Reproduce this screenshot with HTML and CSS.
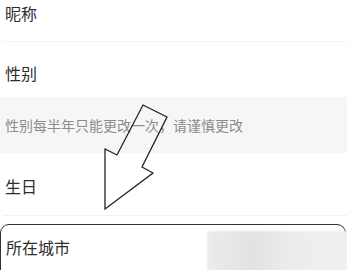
FILE: index.html
```html
<!DOCTYPE html>
<html lang="zh">
<head>
<meta charset="utf-8">
<link rel="stylesheet" href="styles.css">
</head>
<body>
<div class="page">
  <div class="row row-first"><span class="label">昵称</span></div>
  <div class="divider"></div>
  <div class="row row-gender"><span class="label">性别</span></div>
  <div class="notice">性别每半年只能更改一次，请谨慎更改</div>
  <div class="row row-birthday"><span class="label">生日</span></div>
  <div class="divider"></div>
  <div class="city-box">
    <span class="label">所在城市</span>
    <div class="blur-value"></div>
  </div>
  <svg class="arrow" width="347" height="270" viewBox="0 0 347 270">
    <polygon points="105,209 105,149 117,155 143,105 167,117 142,167 153,173" fill="none" stroke="#222" stroke-width="1.3" stroke-linejoin="miter"/>
  </svg>
</div>
</body>
</html>
```
FILE: styles.css
```css
html, body {
  margin: 0;
  padding: 0;
  background: #ffffff;
}
.page {
  position: relative;
  width: 347px;
  height: 270px;
  overflow: hidden;
  font-family: "Noto Sans CJK SC", "Noto Sans", sans-serif;
  display: flex;
  flex-direction: column;
}
.page > * {
  flex-shrink: 0;
}
.label {
  font-size: 16px;
  color: #2e2e2e;
  line-height: 26px;
}
.row {
  display: flex;
  align-items: flex-start;
  padding-left: 5px;
  box-sizing: border-box;
}
.row-first {
  height: 41px;
  padding-top: 0;
}
.divider {
  height: 1px;
  background: #f2f2f2;
  margin-left: 3px;
}
.row-gender {
  height: 55px;
  padding-top: 18px;
}
.notice {
  height: 56px;
  line-height: 56px;
  background: #f6f6f6;
  font-size: 14px;
  color: #8c8c8c;
  padding-left: 5px;
}
.row-birthday {
  height: 62px;
  padding-top: 20px;
}
.city-box {
  margin-top: 8px;
  margin-right: 1px;
  height: 80px;
  border: 1.5px solid #333333;
  border-radius: 9px;
  position: relative;
  padding-left: 5px;
  padding-top: 9px;
  box-sizing: border-box;
  display: flex;
  align-items: flex-start;
}
.blur-value {
  position: absolute;
  left: 206px;
  top: 6px;
  width: 145px;
  height: 60px;
  background: linear-gradient(90deg, #ececec 0%, #e2e2e2 30%, #ededed 60%, #f0f0f0 100%);
  filter: blur(1px);
}
.arrow {
  position: absolute;
  left: 0;
  top: 0;
  pointer-events: none;
}
```
